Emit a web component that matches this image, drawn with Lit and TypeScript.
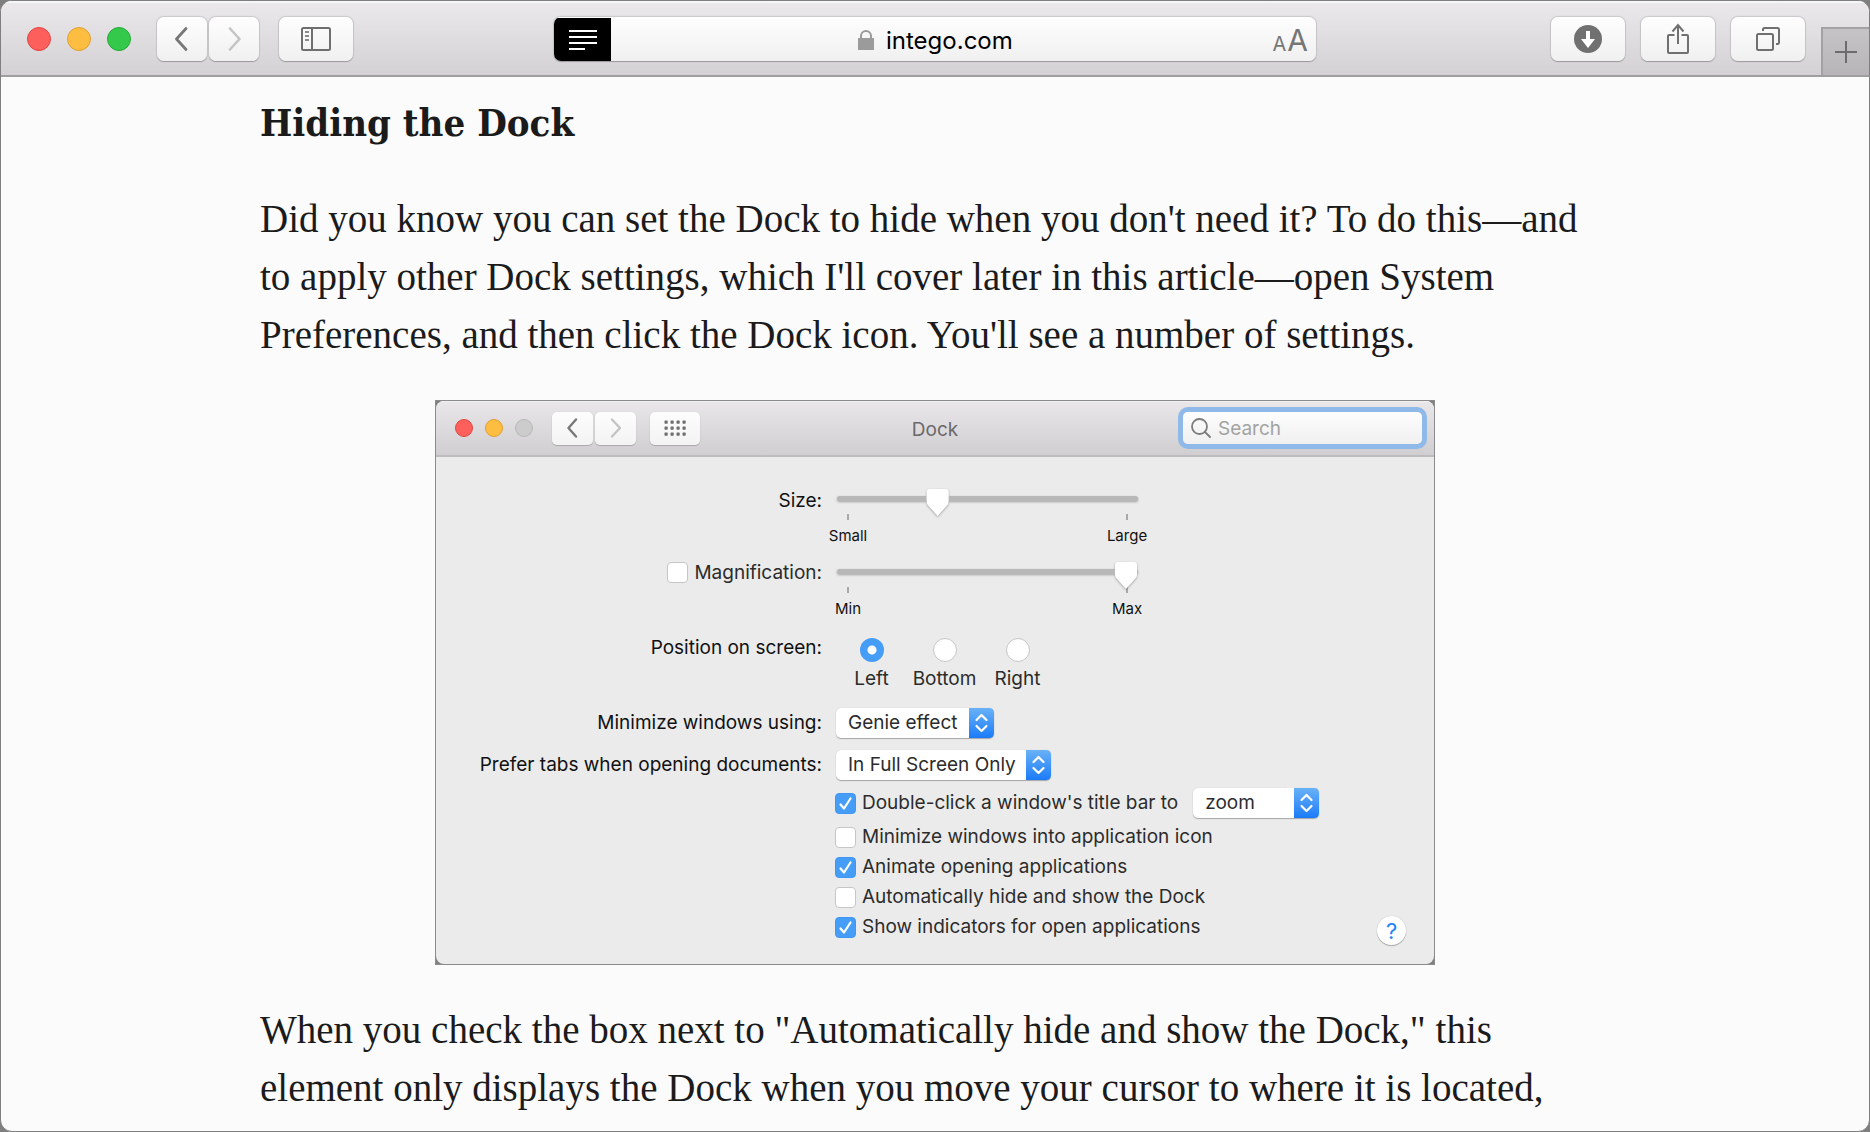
import { LitElement, html, css, svg, nothing } from "lit";
import { customElement, property } from "lit/decorators.js";

@customElement("traffic-lights")
class TrafficLights extends LitElement {
  @property({ type: Boolean }) small = false;

  static styles = css`
    :host { display: block; }
    .lights { display: flex; gap: 16px; }
    .light {
      width: 24px; height: 24px; padding: 0; border-radius: 50%;
      border: 1px solid; box-sizing: border-box;
    }
    .small { gap: 12px; }
    .small .light { width: 18px; height: 18px; }
    .close { background: #fd605c; border-color: #e2453f; }
    .minimize { background: #fdbd41; border-color: #dfa033; }
    .zoom { background: #34c94a; border-color: #27a938; }
    .small .zoom { background: #cdcccd; border-color: #b9b8b9; }
  `;

  render() {
    return html`
      <div class="lights ${this.small ? "small" : ""}">
        <button class="light close" aria-label="Close"></button>
        <button class="light minimize" aria-label="Minimize"></button>
        <button class="light zoom" aria-label="Full screen"></button>
      </div>
    `;
  }
}

const checkmark = svg`<path d="M5.5 11.5 L9 15.5 L15.5 5.5" fill="none" stroke="#fff" stroke-width="2.2" stroke-linecap="round" stroke-linejoin="round"/>`;

@customElement("dock-preferences")
class DockPreferences extends LitElement {
  static styles = css`
    :host {
      display: block; background: #7f7f7f;
      font-family: Inter, Roboto, "Liberation Sans", sans-serif;
      font-size: 19px; line-height: 24px; color: #2c2c2c;
    }
    .frame { border: 1px solid #8b8a8c; }
    .window { border-radius: 8px; background: #ebebeb; overflow: hidden; }
    .titlebar {
      display: grid; grid-template-columns: 1fr auto 1fr; align-items: center;
      height: 54px; padding: 0 12px;
      background: linear-gradient(#e9e7e9, #d1ced2);
      border-bottom: 2px solid #bfbcc0;
      box-shadow: 0 1px 0 #f2f1f2 inset;
    }
    .group { display: flex; align-items: center; padding-left: 7px; }
    .nav { display: flex; gap: 2px; margin: 0 14px 0 19px; }
    .tool {
      display: grid; place-items: center; box-sizing: border-box;
      width: 41px; height: 33px; padding: 0; border: 0; border-radius: 5px;
      background: linear-gradient(#fdfdfd, #f3f3f3);
      box-shadow: 0 1px 1px #a9a7a9, 0 0 1px #c4c2c4;
    }
    .wide { width: 50px; }
    .title { margin: 0; font-size: 19px; font-weight: 400; color: #6a686b; line-height: 24px; padding-top: 4px; }
    .search {
      justify-self: end; display: flex; align-items: center; gap: 7px;
      box-sizing: border-box; width: 239px; height: 32px; padding: 0 8px;
      border-radius: 5px; background: linear-gradient(#fdfdfd, #f0f0f0);
      box-shadow: 0 0 0 5px #8eb9e8;
    }
    .search input {
      flex: 1; min-width: 0; padding: 2px 0 0; border: 0; outline: 0; background: none;
      font: inherit; color: inherit;
    }
    .search input::placeholder { color: #a3a3a3; opacity: 1; }

    .body { padding: 32px 28px 19px 0; }
    .row { display: grid; grid-template-columns: 386px 1fr; column-gap: 13px; align-items: start; }
    .label { justify-self: end; color: #111; }
    .magnify { display: flex; align-items: center; gap: 6px; line-height: 21px; color: #2c2c2c; }
    .slider { width: 301px; padding: 7px 0 0 2px; margin-bottom: 16px; }
    .slider input {
      display: block; appearance: none; width: 100%; height: 5px; margin: 0;
      background: none; filter: drop-shadow(0 1px 1px #00000050);
    }
    .slider input::-webkit-slider-runnable-track { height: 5px; border-radius: 3px; background: #b8b8b8; }
    .slider input::-webkit-slider-thumb {
      appearance: none; width: 24px; height: 27px; margin-top: -7px; background: #fff;
      clip-path: path("M4 0 H20 Q23 0 23 3 V13 Q23 15 21 17 L12 27 L3 17 Q1 15 1 13 V3 Q1 0 4 0 Z");
    }
    .scale { display: flex; justify-content: space-between; margin: 13px -19px 0; }
    .stop {
      display: flex; flex-direction: column; align-items: center; gap: 6px;
      width: 60px; font-size: 15px; line-height: 20px; color: #111;
    }
    .stop::before { content: ""; width: 2px; height: 6px; background: #a9a9a9; }

    .position { padding-top: 1px; }
    .radios { display: flex; padding-top: 2px; margin-bottom: 17px; }
    .radio { display: flex; flex-direction: column; align-items: center; gap: 5px; width: 73px; }
    .radio input {
      appearance: none; box-sizing: border-box; width: 24px; height: 24px; margin: 0;
      border: 1px solid #c6c6c6; border-radius: 50%; background: #fff;
    }
    .radio input:checked { border: 0; background: radial-gradient(circle, #fff 4px, #459df8 5px); }

    .chooser { display: grid; align-items: center; }
    .chooser > * { grid-area: 1 / 1; }
    .chooser select {
      appearance: none; box-sizing: border-box; width: 100%; height: 30px; margin: 0;
      padding: 0 26px 0 12px; border: 0; border-radius: 5px; background: #fff;
      box-shadow: 0 1px 1px #a5a5a5, 0 0 1px #c0c0c0; font: inherit; color: inherit;
    }
    .chooser svg { justify-self: end; pointer-events: none; }
    .genie { width: 159px; }
    .tabs { width: 216px; }
    .action { width: 126px; margin-left: 15px; }
    .field { align-items: center; margin-bottom: 12px; }
    .field .chooser { padding-left: 1px; box-sizing: border-box; }
    .last { margin-bottom: 8px; }

    .options { display: flex; justify-content: space-between; align-items: flex-end; }
    .list { padding-bottom: 3px; }
    .option { display: flex; align-items: center; height: 30px; }
    .option:first-child { margin-bottom: 4px; }
    .check { display: flex; align-items: center; gap: 6px; }
    .box { display: grid; }
    .box > * { grid-area: 1 / 1; }
    .box input {
      appearance: none; box-sizing: border-box; width: 21px; height: 21px; margin: 0;
      border: 1px solid #c6c6c6; border-radius: 4px; background: #fff;
    }
    .box input:checked { border-color: #3f97f5; background: #459df8; }
    .box svg { pointer-events: none; visibility: hidden; }
    .box input:checked + svg { visibility: visible; }
    .help {
      width: 29px; height: 29px; padding: 0; border: 0; border-radius: 50%;
      background: #fff; box-shadow: 0 1px 1px #a5a5a5, 0 0 1px #b5b5b5;
      font: inherit; font-size: 22px; color: #2384fb;
    }
  `;

  private box(id: string, checked: boolean) {
    return html`<span class="box">
      <input type="checkbox" id=${id} ?checked=${checked} />
      <svg width="21" height="21" viewBox="0 0 21 21" aria-hidden="true">${checkmark}</svg>
    </span>`;
  }

  private check(id: string, text: string, checked: boolean, extra: unknown = nothing) {
    return html`<div class="option">
      <span class="check">${this.box(id, checked)}<label for=${id}>${text}</label></span>
      ${extra}
    </div>`;
  }

  private chooser(id: string, cls: string, option: string, label = "") {
    return html`<div class="chooser ${cls}">
      <select id=${id} aria-label=${label || nothing}><option>${option}</option></select>
      <svg width="25" height="30" viewBox="0 0 25 30" aria-hidden="true">
        <defs><linearGradient id="blue" x2="0" y2="1"><stop stop-color="#69b2f7"/><stop offset="1" stop-color="#1b7bf8"/></linearGradient></defs>
        <path d="M0 0 H20 Q25 0 25 5 V25 Q25 30 20 30 H0 Z" fill="url(#blue)"/>
        <path d="M7.5 12 L12.5 7 L17.5 12 M7.5 18 L12.5 23 L17.5 18" fill="none" stroke="#fff" stroke-width="2.2" stroke-linecap="round" stroke-linejoin="round"/>
      </svg>
    </div>`;
  }

  private slider(id: string, value: number, low: string, high: string, label = "") {
    return html`<div class="slider">
      <input type="range" id=${id} min="0" max="100" .value=${String(value)} aria-label=${label || nothing} />
      <div class="scale"><span class="stop">${low}</span><span class="stop">${high}</span></div>
    </div>`;
  }

  private radio(text: string, checked: boolean) {
    return html`<label class="radio"><input type="radio" name="position" ?checked=${checked} />${text}</label>`;
  }

  render() {
    const dots = [0, 1, 2, 3].flatMap((c) => [0, 1, 2].map((r) =>
      svg`<rect x=${c * 6 + 0.5} y=${r * 6 + 1.5} width="3.2" height="3.2" rx="0.6"/>`));
    return html`<div class="frame"><section class="window" aria-label="Dock">
      <header class="titlebar">
        <div class="group">
          <traffic-lights small></traffic-lights>
          <div class="nav">
            <button class="tool" aria-label="Back"><svg width="12" height="20" viewBox="0 0 12 20"><path d="M9 1.5 L1.5 10 L9 18.5" fill="none" stroke="#787878" stroke-width="2.4" stroke-linecap="round" stroke-linejoin="round"/></svg></button>
            <button class="tool" aria-label="Forward"><svg width="12" height="20" viewBox="0 0 12 20"><path d="M2 1.5 L10 10 L2 18.5" fill="none" stroke="#c2c2c2" stroke-width="2.2" stroke-linecap="round" stroke-linejoin="round"/></svg></button>
          </div>
          <button class="tool wide" aria-label="Show all"><svg width="22" height="18" viewBox="0 0 22 18" fill="#6e6e6e">${dots}</svg></button>
        </div>
        <h3 class="title">Dock</h3>
        <label class="search">
          <svg width="20" height="20" viewBox="0 0 20 20" fill="none" stroke="#7d7d7d" stroke-width="1.8" stroke-linecap="round" aria-hidden="true"><circle cx="8.5" cy="8.5" r="7.5"/><path d="M14 14 L19 19"/></svg>
          <input type="text" placeholder="Search" aria-label="Search" />
        </label>
      </header>
      <div class="body">
        <div class="row">
          <label class="label" for="size">Size:</label>
          ${this.slider("size", 32, "Small", "Large")}
        </div>
        <div class="row">
          <span class="label magnify">${this.box("magnify", false)}<label for="magnify">Magnification:</label></span>
          ${this.slider("magnification", 100, "Min", "Max", "Magnification amount")}
        </div>
        <div class="row position" role="radiogroup" aria-labelledby="position">
          <span class="label" id="position">Position on screen:</span>
          <div class="radios">${this.radio("Left", true)}${this.radio("Bottom", false)}${this.radio("Right", false)}</div>
        </div>
        <div class="row field">
          <label class="label" for="effect">Minimize windows using:</label>
          ${this.chooser("effect", "genie", "Genie effect")}
        </div>
        <div class="row field last">
          <label class="label" for="tabs">Prefer tabs when opening documents:</label>
          ${this.chooser("tabs", "tabs", "In Full Screen Only")}
        </div>
        <div class="row">
          <span></span>
          <div class="options">
            <div class="list">
              ${this.check("double", "Double-click a window's title bar to", true, this.chooser("action", "action", "zoom", "Title bar action"))}
              ${this.check("into", "Minimize windows into application icon", false)}
              ${this.check("animate", "Animate opening applications", true)}
              ${this.check("hide", "Automatically hide and show the Dock", false)}
              ${this.check("indicators", "Show indicators for open applications", true)}
            </div>
            <button class="help" aria-label="Help">?</button>
          </div>
        </div>
      </div>
    </section></div>`;
  }
}

@customElement("app-root")
class AppRoot extends LitElement {
  static styles = css`
    :host { display: block; background: #7f7f7f; }
    .window {
      display: flex; flex-direction: column; box-sizing: border-box; height: 100vh;
      border: 1px solid #7f7f7f; border-radius: 12px; overflow: hidden; background: #fbfbfb;
    }
    .toolbar {
      flex: none; display: grid; grid-template-columns: 1fr minmax(0, 762px) 1fr; align-items: center;
      box-sizing: border-box; height: 76px; padding-top: 2px; border-bottom: 2px solid #a09ea0;
      background: linear-gradient(#ebe9ec, #d3d1d4);
      box-shadow: 0 2px 0 #f6f5f7 inset;
    }
    .left, .right { display: flex; align-items: center; }
    .left { padding-left: 26px; }
    .right { justify-content: flex-end; gap: 16px; align-self: stretch; }
    .nav { display: flex; gap: 2px; margin: 0 20px 0 26px; }
    .tool {
      display: grid; place-items: center; width: 74px; height: 44px; padding: 0; border: 0;
      border-radius: 7px; background: linear-gradient(#fefefe, #f0f0f0);
      box-shadow: 0 1px 1px #9c9a9d, 0 0 1px 1px #c9c7ca;
    }
    .nav .tool { width: 50px; }
    .address {
      display: grid; grid-template-columns: 57px 1fr 57px; align-items: center; height: 44px;
      border-radius: 7px; overflow: hidden; background: linear-gradient(#fefefe, #f0f0f0);
      box-shadow: 0 1px 1px #9c9a9d, 0 0 1px 1px #c9c7ca;
      font-family: Inter, Roboto, "Liberation Sans", sans-serif;
    }
    .reader { display: grid; place-items: center; height: 44px; padding: 0; border: 0; background: #000; }
    .location { display: flex; justify-content: center; align-items: center; gap: 12px; }
    .location input {
      box-sizing: border-box; width: 126px; height: 32px; padding: 2px 0 0; border: 0; outline: 0;
      background: none; font: inherit; font-size: 24px; color: #000;
    }
    .sizes {
      display: flex; justify-content: flex-end; align-items: baseline; gap: 1px; padding: 5px 8px 0 0;
      border: 0; background: none; font: inherit; font-size: 30px; line-height: 36px; color: #767676;
    }
    .less { font-size: 20px; }
    .add {
      align-self: flex-end; display: grid; place-items: center; width: 48px; height: 48px; padding: 0;
      border: 2px solid #a3a1a4; border-width: 2px 0 0 2px; background: linear-gradient(#c5c3c6, #b7b5b8);
    }
    .page { flex: 1; min-height: 0; overflow: hidden; }
    .article {
      max-width: 1350px; margin: 0 auto; padding-top: 17px;
      font-family: Georgia, "Liberation Serif", serif; font-size: 39px; line-height: 58px; color: #1b1b1b;
    }
    .heading {
      margin: 0 0 38px; font-family: Georgia, "DejaVu Serif Condensed", "DejaVu Serif", serif;
      font-size: 38px; font-weight: 700; line-height: 58px;
    }
    .text { margin: 0; }
    .figure { max-width: 1000px; margin: 36px auto; }
  `;

  render() {
    return html`<div class="window">
      <header class="toolbar">
        <div class="left">
          <traffic-lights></traffic-lights>
          <div class="nav">
            <button class="tool" aria-label="Back"><svg width="14" height="24" viewBox="0 0 14 24"><path d="M11 1.5 L1.5 12 L11 22.5" fill="none" stroke="#777" stroke-width="2.8" stroke-linecap="round" stroke-linejoin="round"/></svg></button>
            <button class="tool" aria-label="Forward"><svg width="14" height="24" viewBox="0 0 14 24"><path d="M3 1.5 L12.5 12 L3 22.5" fill="none" stroke="#c4c4c4" stroke-width="2.6" stroke-linecap="round" stroke-linejoin="round"/></svg></button>
          </div>
          <button class="tool" aria-label="Sidebar"><svg width="30" height="24" viewBox="0 0 30 24" fill="none" stroke="#6f6f6f" stroke-width="2"><rect x="1" y="1" width="28" height="22" rx="1.5"/><path d="M11 1 V23"/><path d="M4 5 H8 M4 9 H8 M4 13 H8" stroke="#8a8a8a"/></svg></button>
        </div>
        <div class="address">
          <button class="reader" aria-label="Reader view"><svg width="28" height="20" viewBox="0 0 28 20"><path d="M0 1 H28 M0 7 H28 M0 13 H28 M0 19 H16" stroke="#fff" stroke-width="2"/></svg></button>
          <label class="location">
            <svg width="16" height="20" viewBox="0 0 16 20" aria-hidden="true"><rect y="8" width="16" height="12" fill="#9b9b9b"/><path d="M3 9 V6 A5 5 0 0 1 13 6 V9" fill="none" stroke="#9b9b9b" stroke-width="2"/></svg>
            <input type="text" value="intego.com" aria-label="Address" />
          </label>
          <button class="sizes" aria-label="Text size"><span class="less">A</span><span>A</span></button>
        </div>
        <div class="right">
          <button class="tool" aria-label="Downloads"><svg width="28" height="28" viewBox="0 0 28 28"><circle cx="14" cy="14" r="14" fill="#707070"/><path d="M12 6 H16 V14 H21 L14 23 L7 14 H12 Z" fill="#fff"/></svg></button>
          <button class="tool" aria-label="Share"><svg width="24" height="32" viewBox="0 0 24 32" fill="none" stroke="#707070" stroke-width="2"><path d="M8.500 12 H3 Q2 12 2 13 V29 Q2 30 3 30 H21 Q22 30 22 29 V13 Q22 12 21 12 H15.500"/><path d="M12 21 V2 M6.500 8.500 L12 2 L17.500 8.500"/></svg></button>
          <button class="tool" aria-label="Show all tabs"><svg width="24" height="24" viewBox="0 0 24 24" fill="none" stroke="#707070" stroke-width="2"><rect x="1" y="7" width="16" height="16" rx="1.500"/><path d="M7 4 V2.500 Q7 1 8.500 1 H21.500 Q23 1 23 2.500 V15.500 Q23 17 21.500 17 H20"/></svg></button>
          <button class="add" aria-label="New tab"><svg width="22" height="22" viewBox="0 0 22 22"><path d="M11 0 V22 M0 11 H22" stroke="#6d6b6e" stroke-width="2"/></svg></button>
        </div>
      </header>
      <main class="page">
        <article class="article">
          <h2 class="heading">Hiding the Dock</h2>
          <p class="text">Did you know you can set the Dock to hide when you don't need it? To do this—and to apply other Dock settings, which I'll cover later in this article—open System Preferences, and then click the Dock icon. You'll see a number of settings.</p>
          <div class="figure"><dock-preferences></dock-preferences></div>
          <p class="text">When you check the box next to "Automatically hide and show the Dock," this element only displays the Dock when you move your cursor to where it is located,</p>
        </article>
      </main>
    </div>`;
  }
}
